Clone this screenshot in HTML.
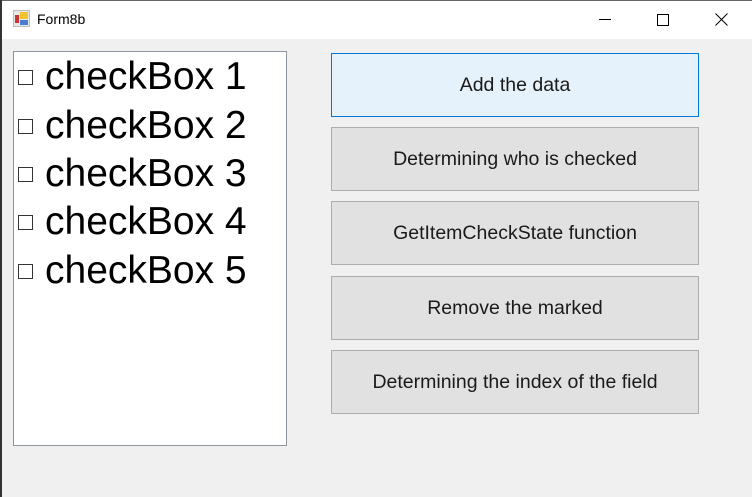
<!DOCTYPE html>
<html><head><style>
body{margin:0;width:752px;height:497px;overflow:hidden;background:#f0f0f0;font-family:"Liberation Sans",Arial,sans-serif;position:relative}
.title{position:absolute;left:0;top:0;width:752px;height:39px;background:#fff}
.edge{position:absolute;left:0;top:0;width:2px;height:497px;background:#333}
.topedge{position:absolute;left:0;top:0;width:752px;height:1px;background:#666}
.list{position:absolute;left:13px;top:51px;width:272px;height:393px;background:#fff;border:1px solid #8f959c}
.row{position:absolute;left:0;height:49px;font-size:39px;color:#000;white-space:nowrap}
.cb{position:absolute;left:4px;width:13px;height:13px;border:1px solid #333;background:#fff}
.row span{position:absolute;left:31px}
.btn{position:absolute;left:331px;width:366px;height:62px;background:#e1e1e1;border:1px solid #adadad;font-size:19.5px;color:#1a1a1a;display:flex;align-items:center;justify-content:center}
</style></head><body>
<div class="title">
<svg style="position:absolute;left:13px;top:10px" width="17" height="17"><rect x="0.5" y="0.5" width="16" height="16" fill="#e8e8e8" stroke="#bbb"/><rect x="2" y="5" width="4" height="8" fill="#c33"/><rect x="7" y="2" width="8" height="7" fill="#f2c230"/><rect x="7" y="10" width="8" height="5" fill="#4a7fd0"/></svg>
<div style="position:absolute;left:37px;top:11px;font-size:14px;color:#000">Form8b</div>
<div style="position:absolute;left:599px;top:19px;width:12px;height:1px;background:#000"></div>
<div style="position:absolute;left:657px;top:14px;width:10px;height:10px;border:1px solid #000"></div>
<svg style="position:absolute;left:715px;top:13px" width="13" height="13"><path d="M0.5 0.5L12.5 12.5M12.5 0.5L0.5 12.5" stroke="#000" stroke-width="1"/></svg>
</div>
<div class="topedge"></div><div class="edge"></div>
<div class="list">
<div class="row" style="top:1px"><div class="cb" style="top:17px"></div><span style="top:2px">checkBox 1</span></div>
<div class="row" style="top:50px"><div class="cb" style="top:17px"></div><span style="top:2px">checkBox 2</span></div>
<div class="row" style="top:98px"><div class="cb" style="top:17px"></div><span style="top:2px">checkBox 3</span></div>
<div class="row" style="top:146px"><div class="cb" style="top:17px"></div><span style="top:2px">checkBox 4</span></div>
<div class="row" style="top:195px"><div class="cb" style="top:17px"></div><span style="top:2px">checkBox 5</span></div>
</div>
<div class="btn" style="top:53px;background:#e5f1fb;border-color:#0078d7">Add the data</div>
<div class="btn" style="top:127px">Determining who is checked</div>
<div class="btn" style="top:201px">GetItemCheckState function</div>
<div class="btn" style="top:276px">Remove the marked</div>
<div class="btn" style="top:350px">Determining the index of the field</div>
</body></html>
